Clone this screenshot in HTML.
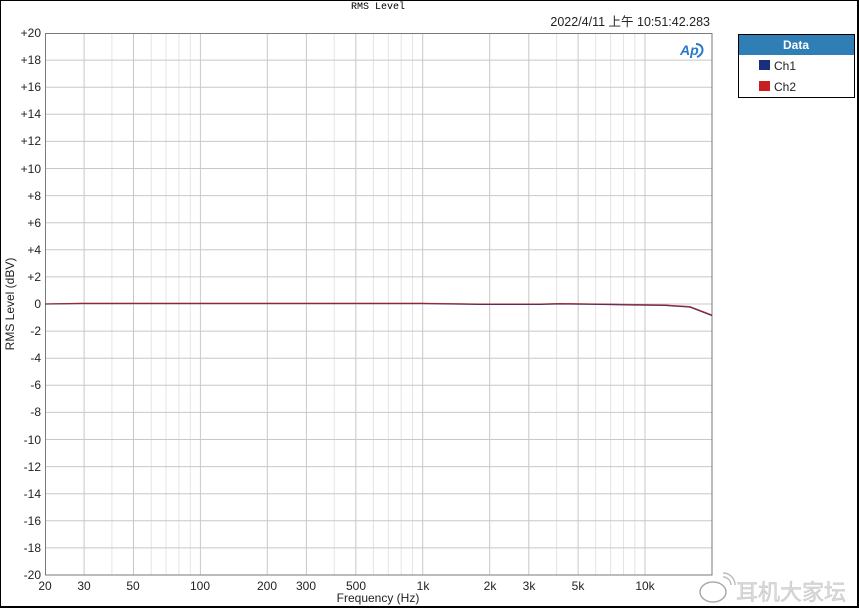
<!DOCTYPE html>
<html><head><meta charset="utf-8"><style>
html,body{margin:0;padding:0;background:#fff;}
svg{display:block;}
text{font-family:"Liberation Sans","Noto Sans CJK SC",sans-serif;}
</style></head><body>
<svg width="859" height="608" viewBox="0 0 859 608" xmlns="http://www.w3.org/2000/svg">
<rect x="0" y="0" width="859" height="608" fill="#fff"/>
<rect x="0.5" y="0.5" width="857" height="606" fill="none" stroke="#000" stroke-width="1"/>
<rect x="857" y="0" width="2" height="608" fill="#000"/>
<rect x="0" y="606" width="859" height="2" fill="#000"/>
<text x="378" y="9" font-family="Liberation Mono,monospace" font-size="10" text-anchor="middle" fill="#000" style="font-family:'Liberation Mono',monospace">RMS Level</text>
<text x="710" y="26" font-size="12.5" text-anchor="end" fill="#222">2022/4/11 上午 10:51:42.283</text>
<!-- minor vertical -->
<g stroke="#e4e4e4" stroke-width="1">
<line x1="111.9" y1="33" x2="111.9" y2="575"/><line x1="151.2" y1="33" x2="151.2" y2="575"/><line x1="166" y1="33" x2="166" y2="575"/><line x1="178.9" y1="33" x2="178.9" y2="575"/><line x1="190.3" y1="33" x2="190.3" y2="575"/>
<line x1="334.2" y1="33" x2="334.2" y2="575"/><line x1="373.4" y1="33" x2="373.4" y2="575"/><line x1="388.3" y1="33" x2="388.3" y2="575"/><line x1="401.2" y1="33" x2="401.2" y2="575"/><line x1="412.5" y1="33" x2="412.5" y2="575"/>
<line x1="556.6" y1="33" x2="556.6" y2="575"/><line x1="595.7" y1="33" x2="595.7" y2="575"/><line x1="610.6" y1="33" x2="610.6" y2="575"/><line x1="623.5" y1="33" x2="623.5" y2="575"/><line x1="634.8" y1="33" x2="634.8" y2="575"/>
</g>
<g stroke="#c8c8c8" stroke-width="1">
<line x1="84.1" y1="33" x2="84.1" y2="575"/><line x1="133.5" y1="33" x2="133.5" y2="575"/><line x1="200.4" y1="33" x2="200.4" y2="575"/><line x1="267.3" y1="33" x2="267.3" y2="575"/><line x1="306.4" y1="33" x2="306.4" y2="575"/><line x1="355.8" y1="33" x2="355.8" y2="575"/><line x1="422.7" y1="33" x2="422.7" y2="575"/><line x1="489.7" y1="33" x2="489.7" y2="575"/><line x1="528.8" y1="33" x2="528.8" y2="575"/><line x1="578.1" y1="33" x2="578.1" y2="575"/><line x1="645" y1="33" x2="645" y2="575"/>
<line x1="45" y1="60.1" x2="712" y2="60.1"/><line x1="45" y1="87.2" x2="712" y2="87.2"/><line x1="45" y1="114.3" x2="712" y2="114.3"/><line x1="45" y1="141.4" x2="712" y2="141.4"/><line x1="45" y1="168.5" x2="712" y2="168.5"/><line x1="45" y1="195.6" x2="712" y2="195.6"/><line x1="45" y1="222.7" x2="712" y2="222.7"/><line x1="45" y1="249.8" x2="712" y2="249.8"/><line x1="45" y1="276.9" x2="712" y2="276.9"/><line x1="45" y1="304" x2="712" y2="304"/><line x1="45" y1="331.1" x2="712" y2="331.1"/><line x1="45" y1="358.2" x2="712" y2="358.2"/><line x1="45" y1="385.3" x2="712" y2="385.3"/><line x1="45" y1="412.4" x2="712" y2="412.4"/><line x1="45" y1="439.5" x2="712" y2="439.5"/><line x1="45" y1="466.6" x2="712" y2="466.6"/><line x1="45" y1="493.7" x2="712" y2="493.7"/><line x1="45" y1="520.8" x2="712" y2="520.8"/><line x1="45" y1="547.9" x2="712" y2="547.9"/>
</g>
<rect x="45.5" y="33.5" width="666.5" height="541.5" fill="none" stroke="#7a7a7a" stroke-width="1"/>
<!-- curves -->
<polyline points="45,304 80,303.5 422,303.5 480,304.3 540,304.3 560,303.8 600,304.3 640,305 665,305.3 690,307 712,315.5" fill="none" stroke="#1a2f7a" stroke-width="1.3"/>
<polyline points="45,304 80,303.3 422,303.3 480,304 540,304 560,303.6 600,304 640,304.6 665,305 690,306.6 712,315" fill="none" stroke="#c82020" stroke-width="1.1" opacity="0.8"/>
<!-- Ap logo -->
<g transform="translate(680,41)">
<path d="M16,3 C24,3 25,13 17,16" fill="none" stroke="#2a7ac4" stroke-width="2"/>
<text x="0" y="14" font-size="14" font-weight="bold" font-style="italic" fill="#2a7ac4">Ap</text>
</g>
<!-- y labels -->
<g font-size="12" fill="#222" text-anchor="end">
<text x="41" y="37">+20</text><text x="41" y="64">+18</text><text x="41" y="91">+16</text><text x="41" y="118">+14</text><text x="41" y="145">+12</text><text x="41" y="173">+10</text><text x="41" y="200">+8</text><text x="41" y="227">+6</text><text x="41" y="254">+4</text><text x="41" y="281">+2</text><text x="41" y="308">0</text><text x="41" y="335">-2</text><text x="41" y="362">-4</text><text x="41" y="389">-6</text><text x="41" y="416">-8</text><text x="41" y="444">-10</text><text x="41" y="471">-12</text><text x="41" y="498">-14</text><text x="41" y="525">-16</text><text x="41" y="552">-18</text><text x="41" y="579">-20</text>
</g>
<!-- x labels -->
<g font-size="12" fill="#222" text-anchor="middle">
<text x="45" y="590">20</text><text x="84" y="590">30</text><text x="133" y="590">50</text><text x="200" y="590">100</text><text x="267" y="590">200</text><text x="306" y="590">300</text><text x="356" y="590">500</text><text x="423" y="590">1k</text><text x="490" y="590">2k</text><text x="529" y="590">3k</text><text x="578" y="590">5k</text><text x="645" y="590">10k</text>
</g>
<text x="378" y="602" font-size="12" fill="#222" text-anchor="middle">Frequency (Hz)</text>
<text transform="translate(14,304) rotate(-90)" font-size="12" fill="#222" text-anchor="middle">RMS Level (dBV)</text>
<!-- legend -->
<rect x="738.5" y="34.5" width="116" height="63" fill="#fff" stroke="#000"/>
<rect x="739" y="35" width="115" height="20" fill="#2f7fb6"/>
<text x="796" y="49" font-size="12" font-weight="bold" fill="#fff" text-anchor="middle">Data</text>
<rect x="759" y="60" width="11" height="10" fill="#1a2f7a"/>
<text x="774" y="70" font-size="12" fill="#222">Ch1</text>
<rect x="759" y="81" width="11" height="10" fill="#c82020"/>
<text x="774" y="91" font-size="12" fill="#222">Ch2</text>
<!-- watermark -->
<g opacity="0.55">
<ellipse cx="713" cy="592" rx="13" ry="10" fill="#fff" stroke="#666" stroke-width="1.5"/>
<path d="M723,577 a8,8 0 0 1 8,8 M723,573 a12,12 0 0 1 12,12" fill="none" stroke="#888" stroke-width="1.5"/>
<text x="736" y="600" font-size="22" fill="#bbb" stroke="#999" stroke-width="0.5">耳机大家坛</text>
</g>
</svg>
</body></html>
